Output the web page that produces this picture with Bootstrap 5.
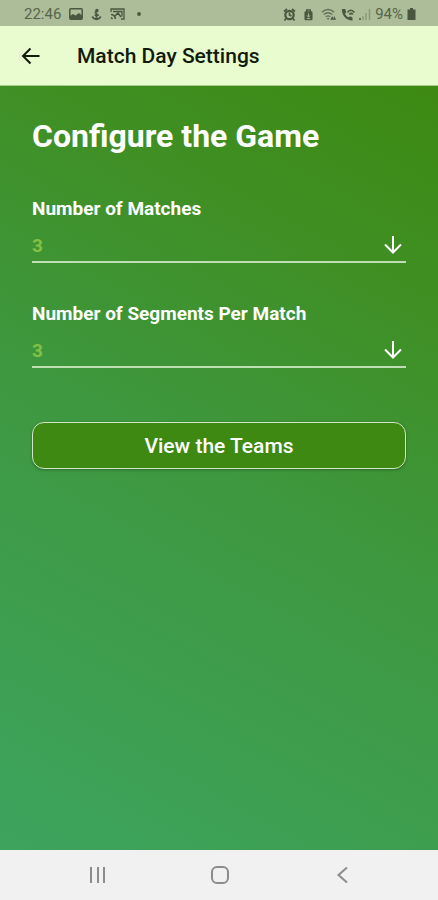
<!DOCTYPE html>
<html lang="en">
<head>
<meta charset="utf-8">
<meta name="viewport" content="width=device-width, initial-scale=1">
<title>Match Day Settings</title>
<link href="https://cdn.jsdelivr.net/npm/bootstrap@5.3.0/dist/css/bootstrap.min.css" rel="stylesheet">
<style>
  body { font-family: Roboto, "Noto Sans", sans-serif; background: #f1f1f1; }
  svg { display: block; flex: none; }
  .status-strip { background: #adbd99; color: #56654a; height: 26px; padding: 2px 22px 0 24px; font-size: 15px; line-height: 24px; }
  .status-strip svg { color: #4a573f; }
  .app-header { background: #e8fcd0; color: #111b0c; height: 60px; padding: 0 20px; gap: 35px; border-bottom: 1px solid #a9cc8c; }
  .app-title { font-size: 21px; line-height: 28px; font-weight: 500; }
  .screen { background: linear-gradient(29deg, #3da45e 0%, #3e9840 48%, #3f8f24 77%, #3d8912 100%); color: #fff; padding: 28px 32px; }
  .screen-title { font-size: 32px; line-height: 44px; font-weight: 700; margin-bottom: 38px; }
  .setting { margin-bottom: 38px; }
  .setting-label { font-size: 19px; line-height: 26px; font-weight: 700; margin-bottom: 6px; }
  .setting-select { height: 35px; padding: 3px 32px 0 0; border: 0; border-bottom: 2px solid #c0deb4; border-radius: 0; background: none; color: #83c044; font-size: 19px; line-height: 30px; font-weight: 700; }
  .setting-select:focus { box-shadow: none; border-color: #fff; }
  .setting-arrow { right: 3px; top: 7px; pointer-events: none; }
  .teams-btn, .teams-btn:hover { height: 47px; margin-top: 54px; padding: 0; background: #3d8912; color: #fff; border: 1px solid #d0e6c4; border-radius: 12px; font-size: 21px; line-height: 28px; font-weight: 500; box-shadow: 0 1px 3px rgba(0,0,0,.3); }
  .system-nav { background: #f1f1f1; color: #8c8c8c; height: 50px; padding: 0 84px 0 86px; }
</style>
<script src="https://cdn.jsdelivr.net/npm/bootstrap@5.3.0/dist/js/bootstrap.bundle.min.js"></script>
</head>
<body>
<div class="d-flex flex-column min-vh-100">
  <div class="status-strip d-flex align-items-center justify-content-between">
    <div class="d-flex align-items-center gap-2">
      <span>22:46</span>
      <svg width="14" height="12" viewBox="0 0 14 12" aria-hidden="true"><rect x=".8" y=".8" width="12.4" height="10.400" rx="1" fill="none" stroke="currentColor" stroke-width="1.500"/><path d="M1 10V8l3-2 2.500 1.500L10 5l3 2.500V11H1z" fill="currentColor"/></svg>
      <svg width="11" height="13" viewBox="0 0 12 13" aria-hidden="true"><path d="M6 1v9M4 4.500l3.500-1.800M1.500 8.500c.5 2 2 3 4.500 3s4-1 4.500-3M4 7.200h4.500" fill="none" stroke="currentColor" stroke-width="1.800"/><circle cx="6.500" cy="2" r="1.800" fill="currentColor"/><path d="M4 10l2 3 2-3z" fill="currentColor"/></svg>
      <svg width="15" height="12" viewBox="0 0 15 12" aria-hidden="true"><path d="M1 4V1h13v10h-3M3 3.500h9v5" fill="none" stroke="currentColor" stroke-width="1.300"/><path d="M1 6.500c3 0 4 2 4.500 4.500M1 9.500l1.500 1.500M5 8l3-3 3 4" fill="none" stroke="currentColor" stroke-width="1.500"/></svg>
      <svg class="ms-1" width="4" height="4" viewBox="0 0 4 4" aria-hidden="true"><circle cx="2" cy="2" r="1.900" fill="currentColor"/></svg>
    </div>
    <div class="d-flex align-items-center gap-1">
      <svg width="13" height="13" viewBox="0 0 13 13" aria-hidden="true"><circle cx="6.500" cy="7" r="4.200" fill="none" stroke="currentColor" stroke-width="2.200"/><path d="M1 3.500L4 1M12 3.500L9 1M3 10.500L1.500 12.500M10 10.500l1.500 2M6.500 4.500V7l2 1" fill="none" stroke="currentColor" stroke-width="1.700"/></svg>
      <svg class="mx-1" width="9" height="13" viewBox="0 0 10 13" aria-hidden="true"><path d="M3 4V1.500h4V4" fill="none" stroke="currentColor" stroke-width="1.500"/><rect x=".5" y="3" width="9" height="10" rx="1.500" fill="currentColor"/><path d="M5 5v4M3.300 7.500L5 9.500l1.700-2M3 11h4" fill="none" stroke="#adbd99"/></svg>
      <svg width="16" height="13" viewBox="0 0 17 13" aria-hidden="true"><path d="M1 4c4-3.500 9-3.500 13 0M3 6.500c3-2.500 6-2.500 9 0M5.200 8.800c1.600-1.200 3-1.200 4.600 0" fill="none" stroke="currentColor" stroke-width="1.400" opacity=".75"/><path d="M7.500 12L6 10.500h3zM10 12l2-4 1.500 4zM14 8l2 4h-3z" fill="currentColor"/></svg>
      <svg width="14" height="13" viewBox="0 0 14 13" aria-hidden="true"><path d="M1 1C.5 7 5 12.500 11.500 12.500V9.500L9 8.300l-1.500 1.200C6 8.700 4.800 7.500 4 5.700L5.200 4.300 4.300 1z" fill="currentColor"/><path d="M6.500 4.500c1.500-3 5-3 6.800 0M8.500 6.500c1-1.500 2.200-1.500 3.200 0" fill="none" stroke="currentColor" stroke-width="1.600"/></svg>
      <svg width="12" height="12" viewBox="0 0 12 12" aria-hidden="true"><path d="M1 10v2" stroke="currentColor" stroke-width="1.500"/><path d="M4 8v4M7 5v7M10.500 1v11" stroke="#8a9a78" stroke-width="1.500"/></svg>
      <div class="d-flex align-items-center"><span>94%</span>
      <svg class="ms-1" width="9" height="12" viewBox="0 0 9 12" aria-hidden="true"><path d="M3 0h3v1.500h2.500V12h-8V1.500H3z" fill="currentColor"/></svg></div>
    </div>
  </div>
  <header class="app-header d-flex align-items-center">
    <button type="button" class="btn p-0 border-0" aria-label="Back">
      <svg width="22" height="22" viewBox="0 0 22 22" fill="none" stroke="#111b0c" stroke-width="2"><path d="M19.500 11H3M10.500 3.500L3 11l7.500 7.500"/></svg>
    </button>
    <h1 class="app-title mb-0">Match Day Settings</h1>
  </header>
  <main class="screen flex-grow-1">
    <h2 class="screen-title">Configure the Game</h2>
    <form>
      <div class="setting">
        <label class="setting-label d-block" for="matches">Number of Matches</label>
        <div class="position-relative">
          <select class="form-select setting-select" id="matches"><option>1</option><option>2</option><option selected>3</option><option>4</option></select>
          <svg class="setting-arrow position-absolute" width="20" height="20" viewBox="0 0 20 20" fill="none" stroke="#fff" stroke-width="2" aria-hidden="true"><path d="M10 1v16M2 9.500l8 8 8-8"/></svg>
        </div>
      </div>
      <div class="setting mb-0">
        <label class="setting-label d-block" for="segments">Number of Segments Per Match</label>
        <div class="position-relative">
          <select class="form-select setting-select" id="segments"><option>1</option><option>2</option><option selected>3</option><option>4</option></select>
          <svg class="setting-arrow position-absolute" width="20" height="20" viewBox="0 0 20 20" fill="none" stroke="#fff" stroke-width="2" aria-hidden="true"><path d="M10 1v16M2 9.500l8 8 8-8"/></svg>
        </div>
      </div>
      <button type="button" class="btn teams-btn w-100">View the Teams</button>
    </form>
  </main>
  <nav class="system-nav d-flex align-items-center justify-content-between" aria-label="System">
    <button type="button" class="btn p-0 border-0" aria-label="Recent apps"><svg width="22" height="22" viewBox="0 0 22 22" fill="none" stroke="#8c8c8c" stroke-width="2"><path d="M5 3v16M12 3v16M18 3v16"/></svg></button>
    <button type="button" class="btn p-0 border-0" aria-label="Home"><svg width="22" height="22" viewBox="0 0 22 22" fill="none" stroke="#8c8c8c" stroke-width="2"><rect x="3" y="3" width="16" height="16" rx="5"/></svg></button>
    <button type="button" class="btn p-0 border-0" aria-label="Back"><svg width="22" height="22" viewBox="0 0 22 22" fill="none" stroke="#8c8c8c" stroke-width="2"><path d="M15 3.500L6.500 11l8.500 7.500"/></svg></button>
  </nav>
</div>
</body>
</html>
